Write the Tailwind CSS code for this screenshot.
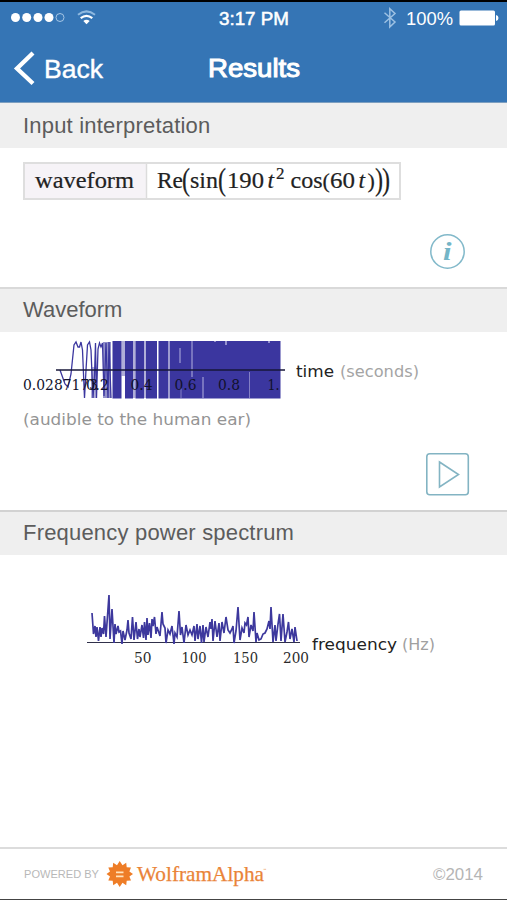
<!DOCTYPE html>
<html lang="en">
<head>
<meta charset="utf-8">
<title>Results</title>
<script src="https://cdn.jsdelivr.net/npm/@tailwindcss/browser@4"></script>
</head>
<body class="w-[507px] h-[900px] overflow-hidden bg-white font-['Liberation_Sans',Arial,sans-serif]">
<div class="flex h-[900px] flex-col border-t-2 border-black">
  <header class="h-[101px] shrink-0 border-b border-[#7d9fc0] bg-[#3575b5] text-white">
    <svg class="block" width="507" height="100" viewBox="0 2 507 100" font-family="Liberation Sans, Arial, sans-serif" fill="#fff">
      <g><circle cx="15.500" cy="17.500" r="4.500"/><circle cx="26.700" cy="17.500" r="4.500"/><circle cx="38" cy="17.500" r="4.500"/><circle cx="49" cy="17.500" r="4.500"/><circle cx="60" cy="17.500" r="4" fill="none" stroke="#a4c5e5"/></g>
      <g fill="none" stroke="#fff" stroke-width="2.200"><path d="M78 14.800Q86.500 8 95 14.800" stroke="#8fb9df" stroke-width="2"/><path d="M80.700 18.200Q86.500 13.700 92.300 18.200"/></g>
      <path d="M83.300 20.900Q86.500 18.800 89.700 20.900L86.500 24.200Z"/>
      <text x="219" y="24.500" font-size="17.500" stroke="#fff" stroke-width=".5" textLength="70" lengthAdjust="spacingAndGlyphs">3:17 PM</text>
      <path d="M384.500 12.800L395 22L389.800 27V8.800L395 13.500L384.500 22.800" fill="none" stroke="#9dc1e3" stroke-width="1.500"/>
      <text x="406" y="24.500" font-size="17.500" textLength="47" lengthAdjust="spacingAndGlyphs">100%</text>
      <rect x="459.500" y="10.500" width="35.500" height="15" rx="1.500"/><path d="M496 15Q498.500 15.500 498.500 18T496 21Z"/>
      <path d="M33 53L17 68.500L33 83.500" fill="none" stroke="#fff" stroke-width="4.300"/>
      <text x="44" y="77.500" font-size="25" stroke="#fff" stroke-width=".4" textLength="59" lengthAdjust="spacingAndGlyphs">Back</text>
      <text x="208" y="77.300" font-size="25" stroke="#fff" stroke-width="1" textLength="92" lengthAdjust="spacingAndGlyphs">Results</text>
    </svg>
  </header>

  <main class="flex flex-1 flex-col text-[#5c5c5c]">
    <section class="flex h-[184px] flex-col">
      <h2 class="flex h-[45px] items-center bg-[#efefef] pl-[23px] pb-px text-[22px] tracking-[0.2px]">Input interpretation</h2>
      <div class="flex flex-1 flex-col justify-between pt-[14px] pb-[17px]">
        <div class="ml-[23px] flex h-[38px] w-[378px] border-2 border-[#dedede]">
          <svg class="overflow-visible" width="374" height="34" viewBox="25 164 374 34" font-family="Liberation Serif, serif" fill="#222" stroke="#222" stroke-width=".2">
            <rect x="25" y="164" width="121" height="34" fill="#f6f3f7" stroke="none"/><path d="M146.500 164V198" stroke="#dcdcdc" stroke-width="1.500"/>
            <text x="35" y="188" font-size="23.500" textLength="99" lengthAdjust="spacingAndGlyphs">waveform</text>
            <text x="157" y="188" font-size="23.500" textLength="26" lengthAdjust="spacingAndGlyphs">Re</text>
            <text x="190" y="188" font-size="23.500" textLength="28" lengthAdjust="spacingAndGlyphs">sin</text>
            <text x="227" y="188" font-size="23" textLength="37" lengthAdjust="spacingAndGlyphs">190</text>
            <text x="267.500" y="188" font-size="23.500" font-style="italic">t</text>
            <text x="276" y="178.500" font-size="17">2</text>
            <text x="290.500" y="188" font-size="23.500" textLength="32" lengthAdjust="spacingAndGlyphs">cos</text>
            <text x="322.500" y="187.500" font-size="22">(</text>
            <text x="330" y="188" font-size="23" textLength="25" lengthAdjust="spacingAndGlyphs">60</text>
            <text x="358.500" y="188" font-size="23.500" font-style="italic">t</text>
            <text x="367.500" y="187.500" font-size="22">)</text>
            <g font-size="31"><text transform="translate(182 189.500) scale(.78 1)">(</text><text transform="translate(218 189.500) scale(.78 1)">(</text><text transform="translate(375 189.500) scale(.78 1)">)</text><text transform="translate(382 189.500) scale(.78 1)">)</text></g>
          </svg>
        </div>
        <svg class="ml-[429px]" width="37" height="37" viewBox="429 232 37 37"><circle cx="447.500" cy="250.500" r="16.700" fill="none" stroke="#82b9ca" stroke-width="1.500"/><text x="443" y="259" font-family="Liberation Serif, serif" font-weight="bold" font-style="italic" font-size="26" textLength="8.500" lengthAdjust="spacingAndGlyphs" fill="#74b5c7">i</text></svg>
      </div>
    </section>

    <section class="flex h-[223px] flex-col border-t-2 border-[#d9d9d9]">
      <h2 class="flex h-[43px] items-center bg-[#efefef] pl-[23px] pb-[2px] text-[22px]">Waveform</h2>
      <svg width="507" height="178" viewBox="0 332 507 178" font-family="DejaVu Sans, sans-serif" font-size="16.500">
        <g fill="none" stroke="#3b369f">
          <path stroke-width="1.300" d="M60 370L65 384L68 387L71 374L74 345L76 342L78 347L79.500 347L81 342L82.500 350L84.500 398L86 370L87.500 345L89.500 342L91 350L93 398L94.500 375L95.500 343L96.500 398L98 349L99.500 343L101 347L102.500 343L104 396L106 343L108 398L109 342L111 398"/>
        </g>
        <g fill="#3b369f">
          <rect x="91" y="367" width="5" height="31" opacity=".4"/>
          <rect x="103" y="342" width="8" height="56" opacity=".55"/>
          <rect x="112.500" y="341" width="9" height="57.500"/><rect x="125" y="341" width="8" height="57.500"/><rect x="135.500" y="341" width="8.500" height="57.500"/><rect x="146" y="341" width="11" height="57.500"/><rect x="158.500" y="341" width="10" height="57.500"/><rect x="169.500" y="341" width="111" height="57.500"/>
        </g>
        <g fill="#3b369f" opacity=".4"><rect x="121.500" y="341" width="3.500" height="35"/><rect x="133" y="341" width="2.500" height="57"/><rect x="144" y="341" width="2" height="57"/></g>
        <g stroke="#b4b1df"><path d="M180 348V363M192 341V377M203 377V398"/><path d="M215 341V342M226 341V345M269 341V343" stroke-width="1.500"/><path d="M181 388V398M249.500 372V398" opacity=".6"/></g>
        <path d="M56 370H285" stroke="#171739" stroke-width="1.300"/>
        <g font-family="DejaVu Serif, serif" font-size="15" fill="#11112b">
          <text x="23" y="390" textLength="75" lengthAdjust="spacingAndGlyphs">0.0287173</text><text x="86" y="390" textLength="23" lengthAdjust="spacingAndGlyphs">0.2</text><text x="130.500" y="390" textLength="22" lengthAdjust="spacingAndGlyphs">0.4</text><text x="174.500" y="390" textLength="22" lengthAdjust="spacingAndGlyphs">0.6</text><text x="218" y="390" textLength="22" lengthAdjust="spacingAndGlyphs">0.8</text><text x="267.500" y="390" textLength="12" lengthAdjust="spacingAndGlyphs">1.</text>
        </g>
        <text x="296" y="376.500" fill="#222" textLength="38" lengthAdjust="spacingAndGlyphs">time</text>
        <text x="340" y="376.500" fill="#a4a4a4" textLength="79" lengthAdjust="spacingAndGlyphs">(seconds)</text>
        <text x="23" y="425" fill="#949494" textLength="228" lengthAdjust="spacingAndGlyphs">(audible to the human ear)</text>
        <g fill="none" stroke="#83b4c3" stroke-width="1.600"><rect x="426.800" y="453.800" width="41.500" height="41" rx="3"/><path d="M439.500 462L458.500 474.500L439.500 487Z"/></g>
      </svg>
    </section>

    <section class="flex h-[337px] flex-col border-t-2 border-[#d2d2d2]">
      <h2 class="flex h-[43px] items-center bg-[#efefef] pl-[23px] pb-[2px] text-[22px] tracking-[0.19px]">Frequency power spectrum</h2>
      <svg width="507" height="292" viewBox="0 555 507 292" font-family="DejaVu Sans, sans-serif" font-size="16.500">
        <path d="M87 642.500H300" stroke="#30304a" stroke-width="1.200"/>
        <path fill="none" stroke="#3d389d" stroke-width="1.700" d="M92 613L93.500 634L95 626L96 637L97 627L98.500 641L100 627L101 637L102 628L103.500 634L104.500 616L106 637L107 623L109 595L110 639L112 609L114 643L115 624L116 634L118 626L119 632L120.500 631L122 644L123 631L125 640L127 630L128 620L129 633L131 639L132.500 617L134 640L136 622L137.500 639L139 629L140 637L142 625L143.500 638L144.500 622L146 640L147 618L148 635L149.500 623L151 638L152 619L153 626L154.500 617L156 634L157 627L160 636L162 612L163 624L165 628L166 643L168 630L170 634L172 626L174 644L175 633L177 637L179 611L180.500 635L182 627L184 643L186 625L188 635L190 630L192 635L194 626L195 641L197 624L198 639L200 626L201.500 643L203 625L204 642L206 627L208 637L210 622L211 629L212 619L213 641L215 621L217 637L219 623L220 641L222 622L224 633L226 617L228 630L230 633L232 629L233 626L234 643L236 631L238 607L240 640L242 628L244 633L245 623L246.500 625L248 617L249 637L251 625L253 631L254 612L256 642L257 633L259 640L261 639L263 634L265 633L267 629L269 621L270 629L271 607L273 642L275 625L276 641L278 624L279.500 614L281 641L283 614L285 642L287 632L288.500 622L290 639L292 629L294 642L295 627L297 641"/>
        <g font-family="DejaVu Serif, serif" font-size="15" fill="#2a2a2a">
          <text x="134" y="663" textLength="17.500" lengthAdjust="spacingAndGlyphs">50</text><text x="181.500" y="663" textLength="25" lengthAdjust="spacingAndGlyphs">100</text><text x="233" y="663" textLength="25" lengthAdjust="spacingAndGlyphs">150</text><text x="283" y="663" textLength="26" lengthAdjust="spacingAndGlyphs">200</text>
        </g>
        <text x="312" y="649.500" fill="#222" textLength="85" lengthAdjust="spacingAndGlyphs">frequency</text>
        <text x="402" y="649.500" fill="#a0a0a0" textLength="33" lengthAdjust="spacingAndGlyphs">(Hz)</text>
      </svg>
    </section>
  </main>

  <footer class="h-[53px] shrink-0 border-t-2 border-b border-t-[#dcdcdc] border-b-[#444]">
    <svg class="block" width="507" height="50" viewBox="0 849 507 50" font-family="Liberation Sans, Arial, sans-serif">
      <text x="24" y="877.500" font-size="11.500" fill="#b8b8b8" textLength="75" lengthAdjust="spacingAndGlyphs">POWERED BY</text>
      <path fill="#ee7d27" d="M119.700 861L122.500 865.200L126.200 862.700L126.700 867.300L131 867.500L129.400 871.600L133 874L129.400 876.500L131 880.500L126.700 880.800L126.200 885.300L122.500 882.800L119.700 887L117 882.800L113.200 885.300L112.700 880.800L108.300 880.500L110 876.500L106.500 874L110 871.600L108.300 867.500L112.700 867.300L113.200 862.700L117 865.200Z"/>
      <path d="M116 872.300H123.500M116 876.300H123.500" stroke="#ffe4bd" stroke-width="1.700"/>
      <text x="137" y="881" font-family="Liberation Serif, serif" font-size="22" fill="#ea8438" stroke="#ea8438" stroke-width=".25" textLength="127" lengthAdjust="spacingAndGlyphs">WolframAlpha</text>
      <text x="263" y="871" font-size="3.500" fill="#ea8438">™</text>
      <text x="433" y="880" font-size="16" fill="#b5b5b5" textLength="50" lengthAdjust="spacingAndGlyphs">©2014</text>
    </svg>
  </footer>
</div>
</body>
</html>
